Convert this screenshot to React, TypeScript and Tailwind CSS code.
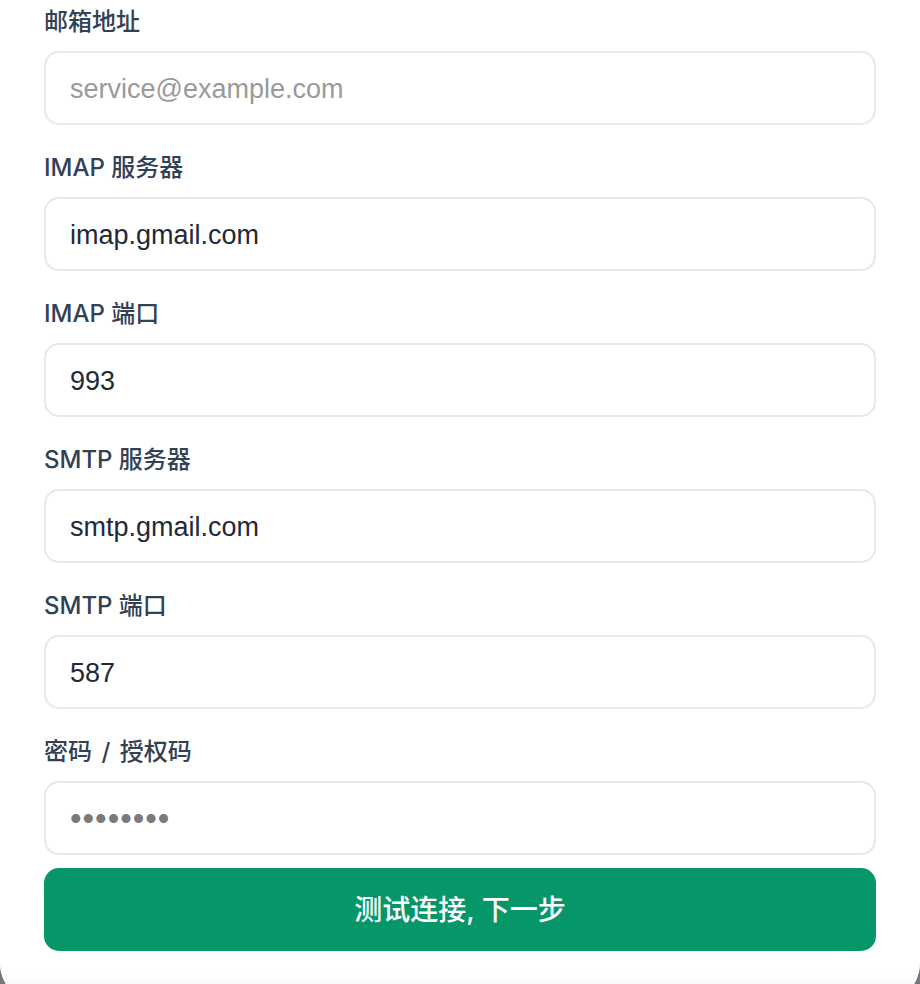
import React from 'react';

const fields = [
  { label: '邮箱地址', placeholder: 'service@example.com', value: '' },
  { label: 'IMAP 服务器', placeholder: '', value: 'imap.gmail.com' },
  { label: 'IMAP 端口', placeholder: '', value: '993' },
  { label: 'SMTP 服务器', placeholder: '', value: 'smtp.gmail.com' },
  { label: 'SMTP 端口', placeholder: '', value: '587' },
];

const inputClass =
  'w-full h-[74px] rounded-[15px] border-2 border-[#e4e8ef] bg-white px-6 pt-[3px] text-[27px] text-[#1f2937] placeholder:text-[#9a9a9a] outline-none';

const labelClass =
  "mb-[14px] block font-['Inter','Noto_Sans_CJK_SC',sans-serif] text-[24px] leading-[30px] font-medium text-[#334155]";

const App: React.FC = () => {
  return (
    <div
      className="h-[984px] w-full overflow-hidden bg-[#77767d]"
      style={{ fontFamily: '"Liberation Sans", "Noto Sans CJK SC", sans-serif' }}
    >
      <div className="w-full rounded-b-[40px] bg-white px-[44px] pt-[7px]">
        <div className="flex flex-col gap-[28px]">
          {fields.map((f) => (
            <div key={f.label}>
              <label className={labelClass}>{f.label}</label>
              <input className={inputClass} placeholder={f.placeholder} defaultValue={f.value} />
            </div>
          ))}
          <div>
            <label className={labelClass}>
              密码 <span className="mx-[3px]">/</span> 授权码
            </label>
            <input
              type="password"
              className="w-full h-[74px] rounded-[15px] border-2 border-[#e4e8ef] bg-white px-6 pt-[2px] text-[33px] tracking-[1px] text-[#1f2937] placeholder:text-[#7b7b7b] outline-none"
              placeholder="••••••••"
            />
          </div>
        </div>
        <button className="mt-[13px] flex h-[83px] w-full items-center justify-center rounded-[15px] bg-[#059669] font-['Inter','Noto_Sans_CJK_SC',sans-serif] text-[28px] font-medium text-white">
          测试连接, 下一步
        </button>
        <div className="-mx-[44px] h-[52px] rounded-b-[40px] bg-gradient-to-b from-white from-40% to-[#f4f4f6]" />
      </div>
    </div>
  );
};

export default App;
